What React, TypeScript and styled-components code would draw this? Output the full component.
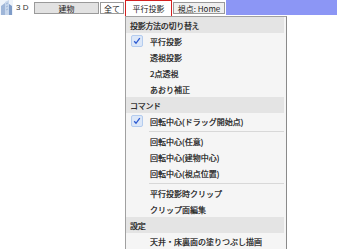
import styled, { createGlobalStyle } from "styled-components";

const GlobalStyle = createGlobalStyle`
  html, body {
    margin: 0;
    padding: 0;
    background: #fff;
  }
  body {
    font-family: "Noto Sans CJK JP", "Liberation Sans", sans-serif;
    font-size: 8px;
    color: #111;
  }
  * {
    box-sizing: border-box;
  }
`;

const Page = styled.div`
  position: relative;
  width: 337px;
  height: 249px;
  overflow: hidden;
`;

const Toolbar = styled.div`
  display: flex;
  align-items: flex-start;
  height: 17px;
`;

const Logo = styled.div`
  flex: none;
  width: 13px;
  height: 15px;
  display: flex;
`;

const Label = styled.span`
  flex: none;
  width: 21px;
  height: 16px;
  line-height: 16px;
  padding-left: 3px;
  font-family: "Liberation Sans", sans-serif;
  font-size: 8px;
  color: #333;
  white-space: pre;
`;

const ToolButton = styled.div<{ $w: number; $bg?: string }>`
  flex: none;
  width: ${(p) => p.$w}px;
  height: 12px;
  margin: 2px 1px 0 0;
  display: flex;
  align-items: center;
  justify-content: center;
  background: ${(p) => p.$bg || "#fff"};
  border: 1px solid #9a9a9a;
  font-size: 8px;
  color: #222;
  white-space: nowrap;
`;

const ActiveButton = styled.div`
  flex: none;
  width: 47px;
  height: 17px;
  margin-right: 1px;
  display: flex;
  align-items: center;
  justify-content: center;
  background: #fff;
  border: 1px solid #d42020;
  font-size: 8px;
  color: #222;
  white-space: nowrap;
`;

const Fill = styled.div`
  flex: 1;
  height: 15px;
  background: #8c96f5;
`;

const Menu = styled.div`
  position: absolute;
  left: 125px;
  top: 16px;
  width: 162px;
  border: 1px solid #a0a0a0;
  border-right-color: #8a8a8a;
  background: #f5f5f5;
  padding: 0 2px 0 0;
  display: flex;
  flex-direction: column;
`;

const Header = styled.div`
  height: 16px;
  display: flex;
  align-items: center;
  padding-left: 4px;
  background: #e4e4e4;
  color: #111;
  letter-spacing: -0.3px;
  -webkit-text-stroke: 0.2px #111;
`;

const Item = styled.div`
  height: 16px;
  display: flex;
  align-items: center;
  padding-left: 5px;
  color: #111;
  white-space: nowrap;
  -webkit-text-stroke: 0.2px #111;
`;

const Check = styled.div<{ $on?: boolean }>`
  width: 12px;
  height: 12px;
  margin-right: 7px;
  display: flex;
  align-items: center;
  justify-content: center;
  background: ${(p) => (p.$on ? "#dce7f8" : "transparent")};
  border: 1px solid ${(p) => (p.$on ? "#b4ccee" : "transparent")};
  border-radius: 2px;
`;

const Separator = styled.div`
  height: 4px;
  display: flex;
  align-items: center;
  padding-left: 23px;
  &::after {
    content: "";
    flex: 1;
    height: 1px;
    background: #d8d8d8;
  }
`;

type Row =
  | { kind: "header"; text: string }
  | { kind: "item"; text: string; checked?: boolean }
  | { kind: "sep" };

const rows: Row[] = [
  { kind: "header", text: "投影方法の切り替え" },
  { kind: "item", text: "平行投影", checked: true },
  { kind: "item", text: "透視投影" },
  { kind: "item", text: "2点透視" },
  { kind: "item", text: "あおり補正" },
  { kind: "header", text: "コマンド" },
  { kind: "item", text: "回転中心(ドラッグ開始点)", checked: true },
  { kind: "sep" },
  { kind: "item", text: "回転中心(任意)" },
  { kind: "item", text: "回転中心(建物中心)" },
  { kind: "item", text: "回転中心(視点位置)" },
  { kind: "sep" },
  { kind: "item", text: "平行投影時クリップ" },
  { kind: "item", text: "クリップ面編集" },
  { kind: "header", text: "設定" },
  { kind: "item", text: "天井・床裏面の塗りつぶし描画" },
];

const CheckMark = () => (
  <svg width="8" height="8" viewBox="0 0 8 8">
    <path d="M1.2 4.3 L3 6.3 L6.8 1.2" fill="none" stroke="#2a58d0" strokeWidth="1.3" />
  </svg>
);

const BuildingIcon = () => (
  <svg width="13" height="15" viewBox="0 0 13 15">
    <rect x="0" y="0" width="13" height="15" fill="#eef3fa" />
    <path d="M1 15 L1 6 L5 3 L5 15 Z" fill="#9fb6d8" />
    <path d="M5 15 L5 2 L9 0 L9 15 Z" fill="#c6d6ec" />
    <path d="M9 15 L9 4 L12 6 L12 15 Z" fill="#7f9cc8" />
    <path d="M6 4 L8 3 M6 7 L8 6 M6 10 L8 9" stroke="#8ea8d0" strokeWidth="0.7" />
  </svg>
);

export default function App() {
  return (
    <Page>
      <GlobalStyle />
      <Toolbar>
        <Logo>
          <BuildingIcon />
        </Logo>
        <Label>3 D</Label>
        <ToolButton $w={65} $bg="#e2e2e2">建物</ToolButton>
        <ToolButton $w={24}>全て</ToolButton>
        <ActiveButton>平行投影</ActiveButton>
        <ToolButton $w={52} $bg="#efefef">視点: Home</ToolButton>
        <Fill />
      </Toolbar>
      <Menu>
        {rows.map((r, i) => {
          if (r.kind === "header") return <Header key={i}>{r.text}</Header>;
          if (r.kind === "sep") return <Separator key={i} />;
          return (
            <Item key={i}>
              <Check $on={r.checked}>{r.checked && <CheckMark />}</Check>
              {r.text}
            </Item>
          );
        })}
      </Menu>
    </Page>
  );
}
